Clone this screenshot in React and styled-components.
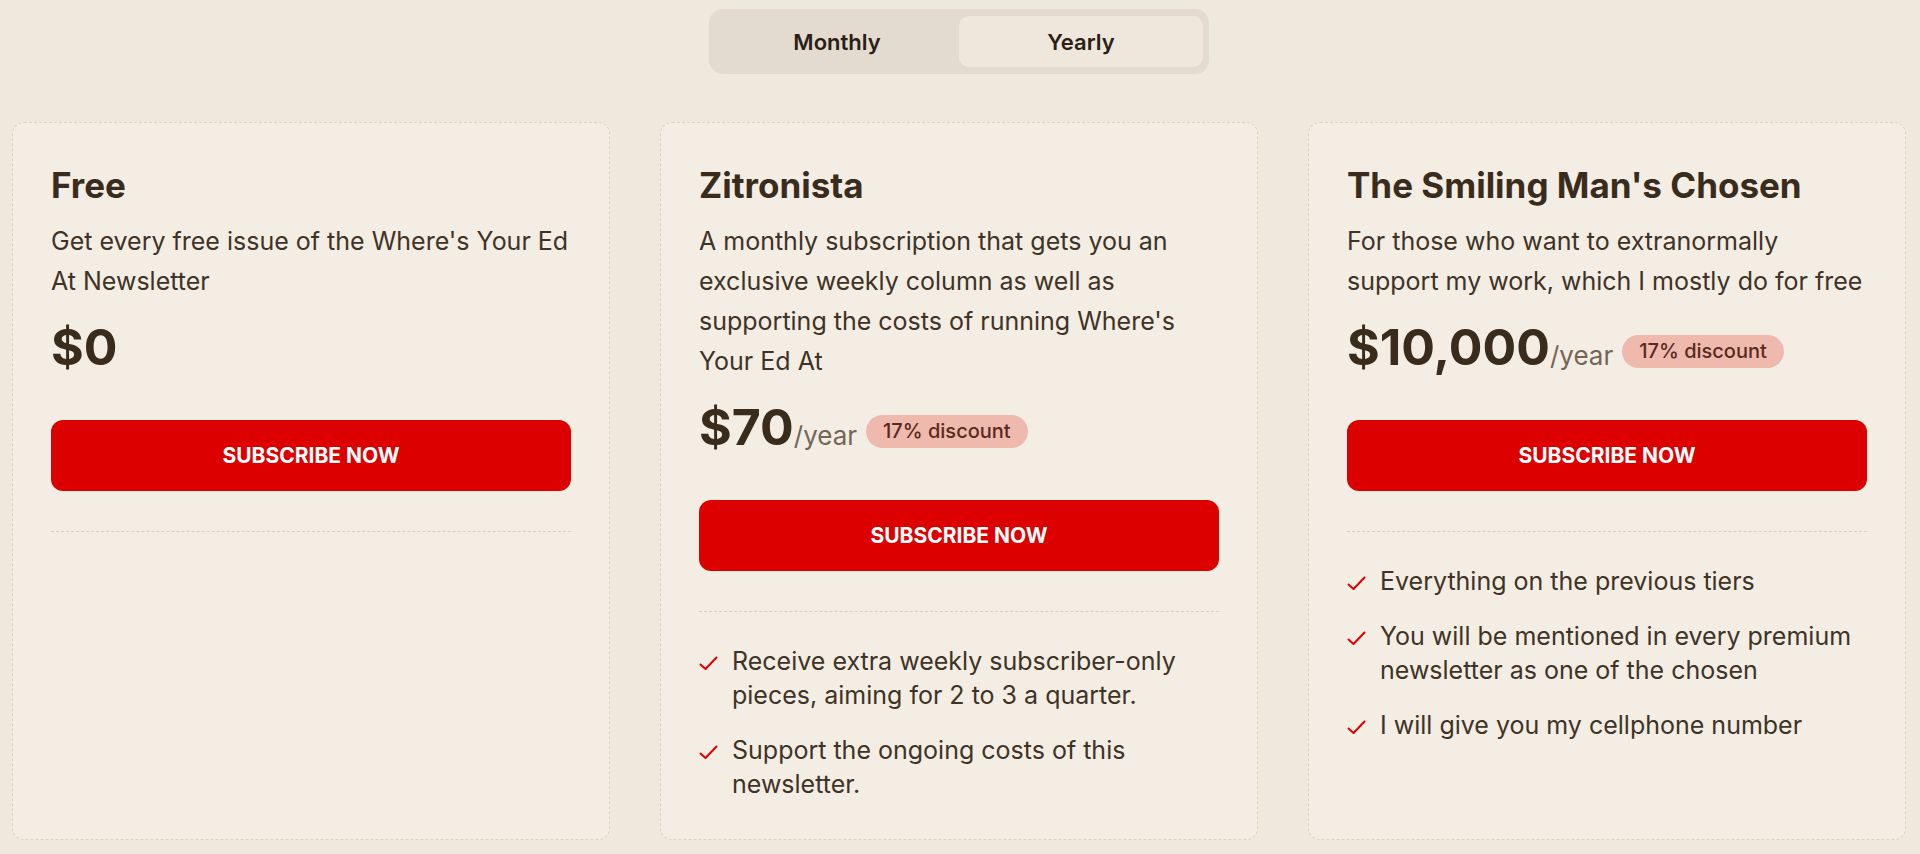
import React, { useState } from 'react'
import styled, { createGlobalStyle } from 'styled-components'

const plans = [
  {
    id: 'free',
    name: 'Free',
    desc: "Get every free issue of the Where's Your Ed At Newsletter",
    price: '$0',
    perks: [],
  },
  {
    id: 'zitronista',
    name: 'Zitronista',
    desc: "A monthly subscription that gets you an exclusive weekly column as well as supporting the costs of running Where's Your Ed At",
    price: '$70',
    period: '/year',
    badge: '17% discount',
    perks: [
      'Receive extra weekly subscriber-only pieces, aiming for 2 to 3 a quarter.',
      'Support the ongoing costs of this newsletter.',
    ],
  },
  {
    id: 'chosen',
    name: "The Smiling Man's Chosen",
    desc: 'For those who want to extranormally support my work, which I mostly do for free',
    price: '$10,000',
    period: '/year',
    badge: '17% discount',
    perks: [
      'Everything on the previous tiers',
      'You will be mentioned in every premium newsletter as one of the chosen',
      'I will give you my cellphone number',
    ],
  },
]

const Check = () => (
  <svg width="19" height="15" viewBox="0 0 19 15" fill="none">
    <path d="M1.5 8.5 L6.5 13 L17.5 1.5" stroke="#e00000" strokeWidth="2" strokeLinecap="round" strokeLinejoin="round" />
  </svg>
)

const App = () => {
  const [period, setPeriod] = useState('yearly')

  return (
    <Page>
      <GlobalStyle />
      <ToggleRow>
        <Toggle>
          <Tab active={period === 'monthly'} onClick={() => setPeriod('monthly')}>Monthly</Tab>
          <Tab active={period === 'yearly'} onClick={() => setPeriod('yearly')}>Yearly</Tab>
        </Toggle>
      </ToggleRow>
      <Cards>
        {plans.map((p) => (
          <Card key={p.id}>
            <Title>{p.name}</Title>
            <Desc>{p.desc}</Desc>
            <PriceRow>
              <Price>{p.price}</Price>
              {p.period && <Period>{p.period}</Period>}
              {p.badge && <Badge>{p.badge}</Badge>}
            </PriceRow>
            <Button>SUBSCRIBE NOW</Button>
            <Divider />
            {p.perks.length > 0 && (
              <Perks>
                {p.perks.map((perk) => (
                  <Perk key={perk}>
                    <CheckBox><Check /></CheckBox>
                    <span>{perk}</span>
                  </Perk>
                ))}
              </Perks>
            )}
          </Card>
        ))}
      </Cards>
    </Page>
  )
}

export default App

const GlobalStyle = createGlobalStyle`
  body {
    margin: 0;
    background: #efe8dd;
    font-family: Inter, "Noto Sans", sans-serif;
    color: #3a2c1d;
  }
`

const Page = styled.div`
  padding: 9px 14px 14px 12px;
`

const ToggleRow = styled.div`
  display: flex;
  justify-content: center;
  margin-bottom: 48px;
`

const Toggle = styled.div`
  display: flex;
  width: 500px;
  box-sizing: border-box;
  padding: 7px 6px;
  background: #e3dbcf;
  border-radius: 14px;
`

const Tab = styled.button`
  flex: 1;
  height: 51px;
  border: none;
  border-radius: 10px;
  background: ${(p) => (p.active ? '#efe7dc' : 'transparent')};
  font-family: Inter, sans-serif;
  font-size: 22px;
  font-weight: 600;
  color: #2a2016;
  cursor: pointer;
`

const Cards = styled.div`
  display: grid;
  grid-template-columns: repeat(3, 1fr);
  gap: 50px;
  align-items: stretch;
`

const Card = styled.div`
  background: #f4ede3;
  border: 1px dashed #dcd2c0;
  border-radius: 12px;
  padding: 43px 38px 38px;
`

const Title = styled.h2`
  margin: 0;
  font-size: 35px;
  line-height: 38px;
  font-weight: 700;
  color: #3a2c1d;
`

const Desc = styled.p`
  margin: 17px 0 0;
  font-size: 25px;
  line-height: 40px;
  color: #3f3327;
`

const PriceRow = styled.div`
  display: flex;
  align-items: baseline;
  margin-top: 17px;
`

const Price = styled.span`
  font-size: 50px;
  line-height: 58px;
  font-weight: 700;
  color: #3a2c1d;
`

const Period = styled.span`
  font-size: 26px;
  color: #716658;
`

const Badge = styled.span`
  align-self: center;
  margin: 8px 0 0 9px;
  padding: 3px 17px;
  border-radius: 999px;
  background: #efb9ae;
  color: #5a2a20;
  font-size: 20px;
  line-height: 27px;
  font-weight: 500;
`

const Button = styled.button`
  display: block;
  width: 100%;
  height: 71px;
  margin-top: 44px;
  border: none;
  border-radius: 12px;
  background: #dc0000;
  color: #fff;
  font-family: Inter, sans-serif;
  font-size: 21px;
  font-weight: 700;
  cursor: pointer;
`

const Divider = styled.hr`
  margin: 40px 0 0;
  border: none;
  border-top: 1px dashed #dccfb6;
`

const Perks = styled.ul`
  list-style: none;
  margin: 32px 0 0;
  padding: 0;
  display: flex;
  flex-direction: column;
  gap: 21px;
`

const Perk = styled.li`
  display: flex;
  align-items: flex-start;
  gap: 14px;
  font-size: 25px;
  line-height: 34px;
  color: #3f3327;
`

const CheckBox = styled.span`
  flex: none;
  display: flex;
  padding-top: 12px;
`
